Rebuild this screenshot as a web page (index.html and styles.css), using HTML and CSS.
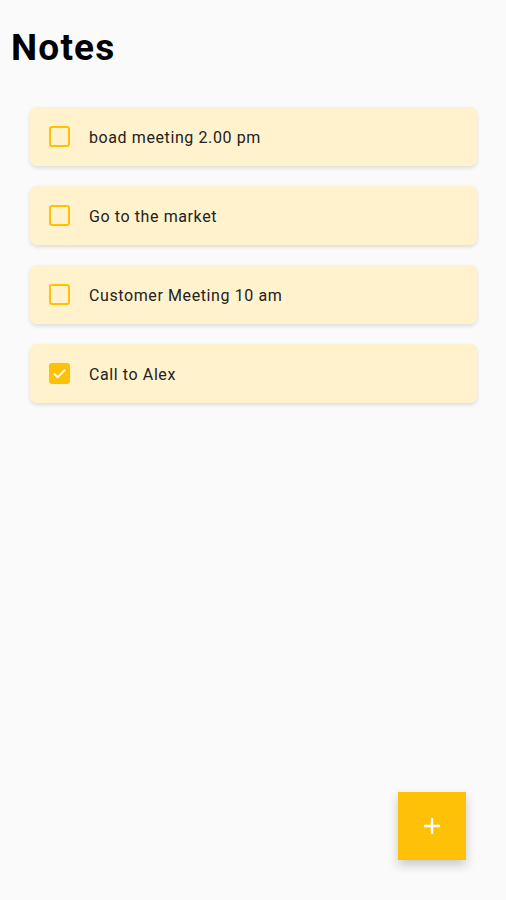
FILE: index.html
```html
<!doctype html>
<html>
<head>
    <meta charset="utf-8">
    <link rel="stylesheet" href="styles.css">
</head>
<body>
    <h1 class="title">Notes</h1>
    <ul class="notes">
        <li class="note"><span class="check"></span><span class="text">boad meeting 2.00 pm</span></li>
        <li class="note"><span class="check"></span><span class="text">Go to the market</span></li>
        <li class="note"><span class="check"></span><span class="text">Customer Meeting 10 am</span></li>
        <li class="note">
            <span class="check done">
                <svg width="15" height="15" viewBox="0 0 16 16"><path d="M2.5 8.5l3.5 3.5 7.5-7.5" fill="none" stroke="#fff" stroke-width="2" stroke-linecap="round" stroke-linejoin="round"/></svg>
            </span>
            <span class="text">Call to Alex</span>
        </li>
    </ul>
    <button class="fab">
        <svg width="18" height="18" viewBox="0 0 18 18"><path d="M9 1v16M1 9h16" stroke="#fff" stroke-width="2.4"/></svg>
    </button>
</body>
</html>
```

FILE: styles.css
```css
* {
    margin: 0;
    padding: 0;
    list-style: none;
    box-sizing: border-box;
}
body {
    background-color: #fafafa;
    font-family: Roboto, "Noto Sans", sans-serif;
    color: #222;
    height: 900px;
}
.title {
    font-size: 37px;
    font-weight: 700;
    letter-spacing: 1.2px;
    color: #000;
    padding: 26px 0 0 11px;
    line-height: 44px;
}
.notes {
    display: flex;
    flex-direction: column;
    gap: 20px;
    margin: 37px 29px 0 30px;
}
.note {
    height: 59px;
    background-color: #fff2cc;
    border-radius: 7px;
    box-shadow: 0 2px 4px rgba(0, 0, 0, 0.12);
    display: flex;
    align-items: center;
    padding-left: 19px;
    gap: 19px;
}
.check {
    width: 21px;
    height: 21px;
    border: 2px solid #ffc107;
    border-radius: 3px;
    display: flex;
    align-items: center;
    justify-content: center;
}
.check.done {
    background-color: #ffc107;
}
.text {
    font-size: 16px;
    letter-spacing: 0.6px;
    padding-top: 2px;
}
.fab {
    position: fixed;
    right: 40px;
    bottom: 40px;
    width: 68px;
    height: 68px;
    border: none;
    background-color: #ffc107;
    box-shadow: 0 5px 10px rgba(0, 0, 0, 0.2);
    display: flex;
    align-items: center;
    justify-content: center;
}
```
